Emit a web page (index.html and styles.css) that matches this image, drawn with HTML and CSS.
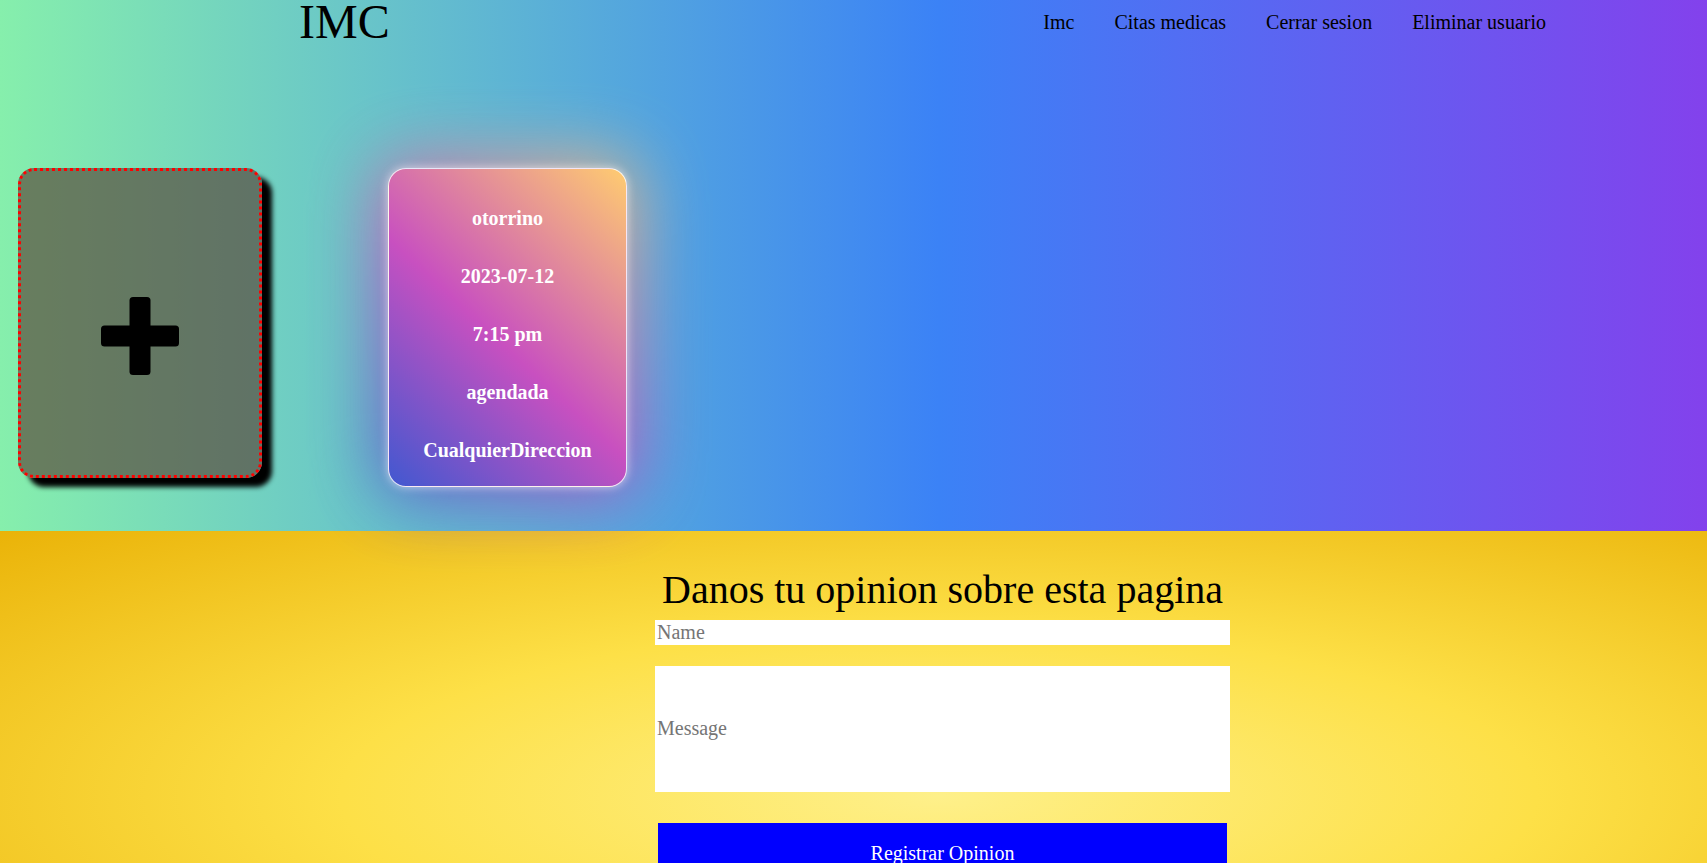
FILE: index.html
```html
<!DOCTYPE html>
<html lang="es">
<head>
<meta charset="utf-8">
<title>IMC</title>
<link rel="stylesheet" href="styles.css">
</head>
<body>
<section class="top">
  <header class="header">
    <h1 class="logo">IMC</h1>
    <nav class="nav">
      <a href="#">Imc</a>
      <a href="#">Citas medicas</a>
      <a href="#">Cerrar sesion</a>
      <a href="#">Eliminar usuario</a>
    </nav>
  </header>
  <div class="cards">
    <div class="card-add">
      <svg class="plus" width="78" height="78" viewBox="0 0 78 78" aria-hidden="true">
        <rect x="28.5" y="0" width="21" height="78" rx="3.5"/>
        <rect x="0" y="28.5" width="78" height="21" rx="3.5"/>
      </svg>
    </div>
    <div class="cita">
      <p>otorrino</p>
      <p>2023-07-12</p>
      <p>7:15 pm</p>
      <p>agendada</p>
      <p>CualquierDireccion</p>
    </div>
  </div>
</section>
<section class="opinion">
  <form class="form">
    <h2 class="form-title">Danos tu opinion sobre esta pagina</h2>
    <input class="field" type="text" placeholder="Name">
    <input class="field field-msg" type="text" placeholder="Message">
    <button class="submit" type="button">Registrar Opinion</button>
  </form>
</section>
</body>
</html>
```

FILE: styles.css
```css
html, body {
  margin: 0;
  padding: 0;
}
body {
  font-family: "Liberation Serif", "Times New Roman", serif;
  color: #000;
  overflow: hidden;
}

.top {
  position: relative;
  z-index: 1;
  height: 531px;
  box-sizing: border-box;
  background-image: linear-gradient(to right, #86efac 0%, #3b82f6 50%, #9333ea 100%);
  background-size: 110% 100%;
  background-repeat: no-repeat;
  background-color: #86efac;
}

.header {
  height: 44px;
  display: flex;
  align-items: center;
  justify-content: space-between;
  padding: 0 161px 0 299px;
}
.logo {
  margin: 0;
  font-size: 48px;
  font-weight: normal;
  line-height: 48px;
}
.nav {
  display: flex;
  gap: 40px;
}
.nav a {
  color: #000;
  text-decoration: none;
  font-size: 20px;
}

.cards {
  display: flex;
  align-items: flex-start;
  gap: 126px;
  padding: 124px 0 0 18px;
}

.card-add {
  width: 238px;
  height: 278px;
  border: 3px dotted #ff0000;
  border-radius: 16px;
  background: rgba(85, 52, 42, 0.6);
  box-shadow: 10px 9px 5px #000;
  display: flex;
  align-items: center;
  justify-content: center;
  padding-top: 26px;
}
.plus {
  display: block;
  fill: #000;
}

.cita {
  position: relative;
  width: 237px;
  border: 1px solid rgba(255, 255, 255, 0.85);
  border-radius: 18px;
  background: linear-gradient(43deg, #4158d0 0%, #c850c0 46%, #ffcc70 100%);
  padding: 38px 0 24px;
  display: flex;
  flex-direction: column;
  gap: 35px;
  color: #fff;
  text-align: center;
}
.cita::before {
  content: "";
  position: absolute;
  inset: -12px;
  border-radius: 30px;
  background: linear-gradient(43deg, #4158d0 0%, #c850c0 46%, #ffcc70 100%);
  filter: blur(34px);
  opacity: 0.85;
  z-index: -1;
}
.cita::after {
  content: "";
  position: absolute;
  inset: -1px;
  border-radius: 18px;
  box-shadow: 0 0 10px rgba(255, 255, 255, 0.6);
  pointer-events: none;
}
.cita p {
  margin: 0;
  font-size: 20px;
  font-weight: bold;
  line-height: 23px;
}

.opinion {
  min-height: 530px;
  box-sizing: border-box;
  padding-top: 35px;
  background-image: radial-gradient(ellipse at center, #fef08a 0%, #fde047 45%, #eab308 100%);
  background-size: 110% 100%;
  background-repeat: no-repeat;
  background-color: #eab308;
}

.form {
  width: 575px;
  margin-left: 655px;
  display: flex;
  flex-direction: column;
  align-items: center;
}
.form-title {
  margin: 0 0 7px;
  font-size: 40px;
  font-weight: normal;
  line-height: normal;
  text-align: center;
  white-space: nowrap;
}
.field {
  align-self: stretch;
  font: inherit;
  font-size: 20px;
  line-height: 23px;
  height: 25px;
  box-sizing: border-box;
  padding: 1px 2px;
  border: none;
  outline: none;
  background: #fff;
  margin: 0 0 20.5px;
}
.field-msg {
  height: 126.5px;
  margin-bottom: 30.5px;
}
.submit {
  width: 99%;
  height: 62px;
  border: none;
  background: #0000ff;
  color: #fff;
  font: inherit;
  font-size: 20px;
  padding: 0;
}
```
